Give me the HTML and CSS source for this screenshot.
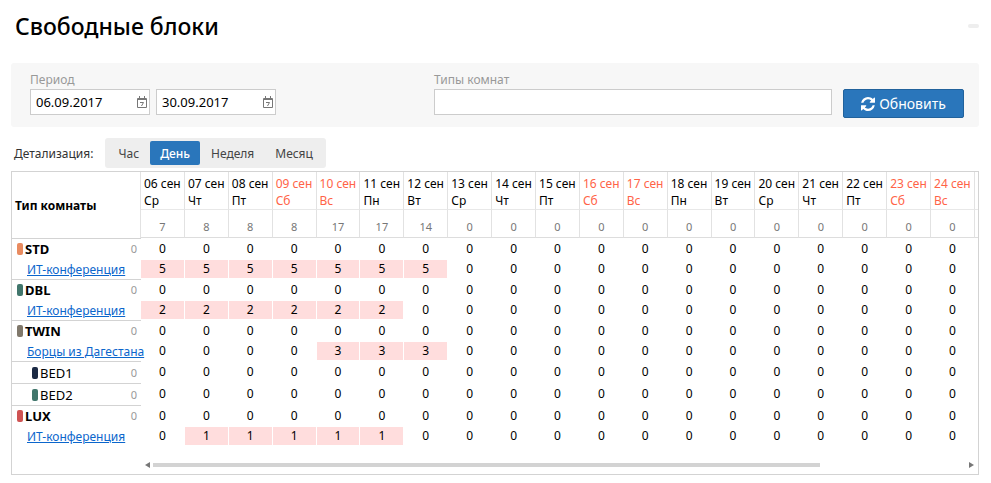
FILE: index.html
```
<!DOCTYPE html>
<html lang="ru">
<head>
    <meta charset="UTF-8" />
    <meta name="viewport" content="width=device-width, initial-scale=1.0" />
    <title>Свободные блоки</title>
    <link rel="stylesheet" href="styles.css">
</head>
<body>
    <header class="page-header">
        <h1>Свободные блоки</h1>
        <span class="toolbar-stub"></span>
    </header>

    <form class="filter">
        <div class="field period">
            <label for="dateFrom">Период</label>
            <div class="dates">
                <div class="date-box">
                    <input type="text" id="dateFrom" value="06.09.2017">
                    <svg width="10" height="12" viewBox="0 0 10 12" fill="none" stroke="#777">
                        <path d="M.5 2.5h9v9h-9zM0 3.5h10M2.5 0v4M7.5 0v4M4 2.5h2" />
                        <path d="M3 6.5h3.5L4.5 10" />
                    </svg>
                </div>
                <div class="date-box">
                    <input type="text" id="dateTo" value="30.09.2017" aria-label="Период, по">
                    <svg width="10" height="12" viewBox="0 0 10 12" fill="none" stroke="#777">
                        <path d="M.5 2.5h9v9h-9zM0 3.5h10M2.5 0v4M7.5 0v4M4 2.5h2" />
                        <path d="M3 6.5h3.5L4.5 10" />
                    </svg>
                </div>
            </div>
        </div>
        <div class="field room-types">
            <label for="roomTypes">Типы комнат</label>
            <input type="text" id="roomTypes">
        </div>
        <button type="button" class="btn">
            <svg width="14" height="14" viewBox="0 0 1536 1536" fill="#fff">
                <path d="M1511 928q0 5-1 7-64 268-268 434.500T764 1536q-146 0-282.500-55T238 1324l-129 129q-19 19-45 19t-45-19-19-45V960q0-26 19-45t45-19h448q26 0 45 19t19 45-19 45l-137 137q71 66 161 102t187 36q134 0 250-65t186-179q11-17 53-117 8-23 30-23h192q13 0 22.500 9.500t9.500 22.500zm25-800v448q0 26-19 45t-45 19h-448q-26 0-45-19t-19-45 19-45l138-138Q969 256 768 256q-134 0-250 65T332 500q-11 17-53 117-8 23-30 23H50q-13 0-22.500-9.500T18 608v-7q65-268 270-434.500T768 0q146 0 284 55.500T1297 212l130-129q19-19 45-19t45 19 19 45z" />
            </svg>
            Обновить
        </button>
    </form>

    <div class="detail">
        <span>Детализация:</span>
        <div class="segments">
            <button type="button">Час</button>
            <button type="button" class="active">День</button>
            <button type="button">Неделя</button>
            <button type="button">Месяц</button>
        </div>
    </div>

    <div class="grid">
        <table>
            <thead>
                <tr id="days">
                    <th class="corner" rowspan="2">Тип комнаты</th>
                </tr>
                <tr id="totals" class="totals"></tr>
            </thead>
            <tbody id="rooms"></tbody>
        </table>
        <div class="scrollbar">
            <svg width="5" height="6" viewBox="0 0 5 6" fill="#777"><path d="M5 0v6L0 3z" /></svg>
            <div class="track"><div class="thumb"></div></div>
            <svg width="5" height="6" viewBox="0 0 5 6" fill="#777"><path d="M0 0v6l5-3z" /></svg>
        </div>
    </div>

    <script src="script.js"></script>
</body>
</html>
```
FILE: styles.css
```
* {
    box-sizing: border-box;
}

body {
    margin: 0;
    padding: 8px 12px 8px 11px;
    font-family: "Noto Sans", "Open Sans", sans-serif;
    font-size: 12px;
    color: #000;
    background-color: #fff;
}

input,
button {
    font-family: inherit;
}

.page-header {
    display: flex;
    justify-content: space-between;
    align-items: center;
    height: 36px;
    padding-left: 4px;
    margin-bottom: 19px;
}

.page-header h1 {
    margin: 0;
    font-size: 23px;
    font-weight: 500;
    line-height: 36px;
}

.toolbar-stub {
    width: 11px;
    height: 4px;
    border-radius: 2px;
    background-color: #eee;
}

/* filter */

.filter {
    display: flex;
    align-items: flex-start;
    padding: 8px 15px 9px 19px;
    border-radius: 3px;
    background-color: #f7f7f7;
}

.field label {
    display: block;
    line-height: 18px;
    color: #999;
}

.field input {
    display: block;
    width: 100%;
    height: 26px;
    padding: 0 5px;
    border: 1px solid #ccc;
    background-color: #fff;
    font-size: 13px;
}

.period {
    flex: 0 0 404px;
}

.dates {
    display: flex;
    gap: 6px;
}

.date-box {
    position: relative;
    width: 120px;
}

.date-box svg {
    position: absolute;
    top: 7px;
    right: 3px;
}

.room-types {
    flex: 1;
}

.btn {
    display: flex;
    align-items: center;
    justify-content: center;
    gap: 4px;
    width: 121px;
    height: 29px;
    margin: 18px 0 0 11px;
    padding: 0;
    border: 1px solid #21629c;
    border-radius: 2px;
    background-color: #2a76bb;
    color: #fff;
    font-size: 14px;
    cursor: pointer;
}

/* detail level */

.detail {
    display: flex;
    align-items: center;
    gap: 12px;
    margin: 11px 0 3px;
    padding-left: 3px;
    color: #333;
}

.segments {
    display: flex;
    gap: 1px;
    padding: 3px;
    border-radius: 3px;
    background-color: #eee;
}

.segments button {
    height: 24px;
    padding: 0 10px;
    border: 0;
    border-radius: 2px;
    background: none;
    color: #444;
    font-size: 12px;
    cursor: pointer;
}

.segments .active {
    background-color: #2a76bb;
    color: #fff;
    font-weight: 500;
}

/* grid */

.grid {
    border: 1px solid #d3d3d3;
}

table {
    width: 100%;
    table-layout: fixed;
    border-collapse: separate;
    border-spacing: 0;
}

th,
td {
    padding: 0;
    font-weight: normal;
}

.corner {
    width: 129px;
    padding: 0 3px;
    border-right: 1px solid #e2e2e2;
    text-align: left;
    font-weight: bold;
}

.day {
    height: 38px;
    padding: 3px 0 0 3px;
    border-right: 1px solid #e2e2e2;
    border-bottom: 1px solid #e8e8e8;
    line-height: 17px;
    text-align: left;
    vertical-align: top;
    white-space: nowrap;
}

.weekend {
    color: #ff6347;
}

.rest {
    width: 3px;
    border-bottom: 1px solid #e8e8e8;
}

.totals td {
    height: 28px;
    padding-top: 5px;
    border-right: 1px solid #e2e2e2;
    border-bottom: 1px solid #ddd;
    color: #777;
    font-size: 11px;
    text-align: center;
}

.totals .rest {
    border-right: 0;
}

tbody th {
    text-align: left;
}

tbody td {
    border: 1px solid #fff;
    border-left: 0;
    line-height: 18px;
    text-align: center;
}

.room th,
.bed th {
    border-top: 1px solid #d3d3d3;
}

.room {
    height: 21px;
}

.bed {
    height: 22px;
}

.block {
    height: 20px;
}

.name {
    display: flex;
    align-items: center;
    gap: 2px;
    padding: 0 4px 0 5px;
    line-height: 18px;
    font-size: 13px;
}

.bed .name {
    padding-left: 20px;
}

.bed .name b {
    font-weight: normal;
}

.name small {
    margin-left: auto;
    color: #999;
    font-size: 11px;
}

.mark {
    width: 6px;
    height: 12px;
    border-radius: 2px;
}

.block th {
    padding-left: 15px;
    white-space: nowrap;
}

.block a {
    color: #0b66cc;
}

.booked {
    background-color: #fdd;
}

.scrollbar {
    display: flex;
    align-items: center;
    gap: 3px;
    margin: 16px 4px 6px 133px;
}

.track {
    flex: 1;
}

.thumb {
    width: 82%;
    height: 4px;
    background-color: #d3d3d3;
}
```
FILE: script.js
```
const weekdays = ['Вс', 'Пн', 'Вт', 'Ср', 'Чт', 'Пт', 'Сб'];
const firstDay = 6;
const visibleDays = 19;
const totals = [7, 8, 8, 8, 17, 17, 14];

// from - index of the first booked day
const rows = [
    { type: 'room', name: 'STD', color: '#e98b60' },
    { type: 'block', name: 'ИТ-конференция', from: 0, values: [5, 5, 5, 5, 5, 5, 5] },
    { type: 'room', name: 'DBL', color: '#41766c' },
    { type: 'block', name: 'ИТ-конференция', from: 0, values: [2, 2, 2, 2, 2, 2] },
    { type: 'room', name: 'TWIN', color: '#80786b' },
    { type: 'block', name: 'Борцы из Дагестана', from: 4, values: [3, 3, 3] },
    { type: 'bed', name: 'BED1', color: '#1b2a44' },
    { type: 'bed', name: 'BED2', color: '#41766c' },
    { type: 'room', name: 'LUX', color: '#cf5353' },
    { type: 'block', name: 'ИТ-конференция', from: 1, values: [1, 1, 1, 1, 1] }
];

let daysHtml = '';
let totalsHtml = '';
for (let i = 0; i < visibleDays; i++) {
    const date = firstDay + i;
    const weekday = new Date(2017, 8, date).getDay();
    const weekend = weekday === 0 || weekday === 6 ? ' weekend' : '';
    daysHtml += `<th class="day${weekend}">${String(date).padStart(2, '0')} сен<br>${weekdays[weekday]}</th>`;
    totalsHtml += `<td>${totals[i] || 0}</td>`;
}
document.getElementById('days').insertAdjacentHTML('beforeend', daysHtml + '<td class="rest"></td>');
document.getElementById('totals').innerHTML = totalsHtml + '<td class="rest"></td>';

document.getElementById('rooms').innerHTML = rows.map((row) => {
    const head = row.type === 'block'
        ? `<a href="#">${row.name}</a>`
        : `<div class="name"><span class="mark" style="background-color: ${row.color}"></span><b>${row.name}</b><small>0</small></div>`;
    let cells = '';
    for (let i = 0; i < visibleDays; i++) {
        const value = row.values ? row.values[i - row.from] : 0;
        cells += value ? `<td class="booked">${value}</td>` : '<td>0</td>';
    }
    return `<tr class="${row.type}"><th>${head}</th>${cells}<td></td></tr>`;
}).join('');
```
